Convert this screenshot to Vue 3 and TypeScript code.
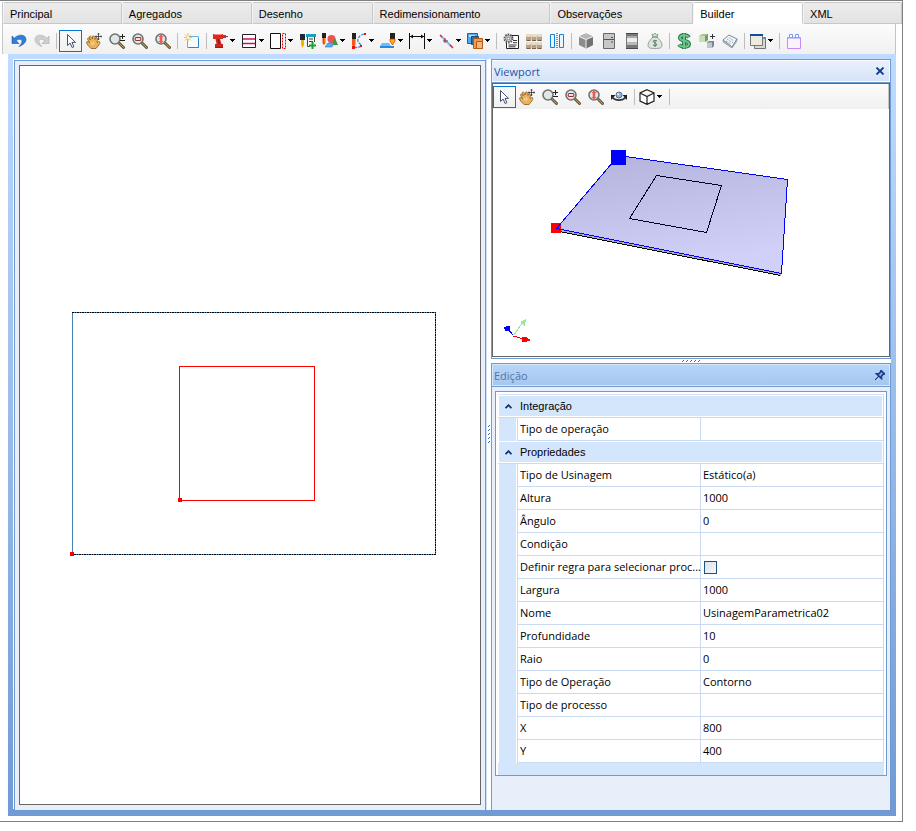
<script setup lang="ts">
import { ref } from 'vue'

interface Tool {
  icon?: string
  label?: string
  menu?: boolean
  sep?: boolean
}
interface Property {
  label: string
  value: string | boolean
}
interface Group {
  title: string
  open: boolean
  rows: Property[]
}

const lens = '<path d="M9.500 9.500l5 5" stroke="#6b5a3a" stroke-width="3" stroke-linecap="round"/><path d="M10.500 10.500l4 4" stroke="#b99a62" stroke-linecap="round"/><circle cx="6" cy="6" r="5" fill="#dfe8e6" stroke="#6f7370" stroke-width="1.600"/>'

// Artwork on a 16 by 16 grid
const icons: Record<string, string> = {
  undo: '<path d="M1 3v7.500h7L5.200 7.700C8 5.500 11.200 6 11 8.500c-.2 2-1.500 3.500-3 5 4-1.500 7-4 7-7C15 1.500 8 .500 3.200 5.200z" fill="#2f7ed8" stroke="#1557ad" stroke-width=".6"/>',
  redo: '<path d="M15 3v7.500H8l2.800-2.800C8 5.500 4.800 6 5 8.500c.2 2 1.500 3.500 3 5-4-1.500-7-4-7-7C1 1.500 8 .500 12.800 5.200z" fill="#cfcfcf" stroke="#a9a9a9" stroke-width=".6"/>',
  pointer: '<path d="M4.500 1.500v11l2.700-2.400 1.900 4.400 1.800-.8-1.900-4.300h3.500z" fill="#fff" stroke="#44506a"/>',
  hand: '<path d="M5 15.500C3 13.500.5 11 .5 9c1-1.200 2.200 0 3.200.8L1.500 6C1.800 4.300 3.200 5 4.300 7L3.200 3.700C4.200 2.300 5.500 3.500 6.300 6l.2-2.700C7.700 2 9 3.500 9 6.500l1.200-2c1.500 0 1.300 2.500.8 5l1.500-1c2.200-.3 1.500 2.500-.5 4.500l-2 2.500z" fill="#e9b35c" stroke="#8a5a1c" stroke-width=".8"/><path d="M5 9l1.500 3M7.500 8.500l.5 3" stroke="#fbe0ad"/><path d="M12.500 0v7M9 3.500h7M11.500 1h2M11.500 6h2M10 2.500v2M15 2.500v2" stroke="#333" stroke-width=".8"/>',
  zoomPm: lens + '<path d="M11 3.500h5M13.500 1v5M11 7.500h5" stroke="#222"/>',
  zoomWin: lens + '<path d="M3.500 4.500h5v3h-5z" fill="none" stroke="#a03030"/><path d="M2 6l2-1.500v3zM10 6L8 4.500v3z" fill="#d44"/>',
  zoomFit: lens + '<path d="M6 1.500L8.800 4H7.300v4h1.500L6 10.500 3.200 8h1.500V4H3.200z" fill="#f45656"/>',
  create: '<path d="M3.500 3.500h11v11h-11z" fill="#f5fbff" stroke="#6bb2e0"/><path d="M4.500 14.500h10v-9" fill="none" stroke="#2f83c5"/><path d="M4 0v9M0 4.500h8M1 1.500l6 6M7 1.500l-6 6" stroke="#efc23c"/><circle cx="4" cy="4.500" r="1.500" fill="#fff5a8"/>',
  drill: '<path d="M1 1h10v1h3v3h-3v1H8l1.500 5H4.500L3.500 6H1z" fill="#d92a22"/><path d="M2 1h8v1H2z" fill="#ff8d80"/><path d="M5.500 6h1.500l1 5H6.500z" fill="#8d1715"/><path d="M3 11h8v4H3z" fill="#c9261f"/><path d="M3 14h8v1H3z" fill="#442"/><path d="M14 3.500h2" stroke="#555"/>',
  rows: '<path d="M1.500 1.500h13v13h-13z" fill="#fff" stroke="#222"/><path d="M2 6h12M2 10.500h12" stroke="#d0105c" stroke-width="1.500"/>',
  edge: '<path d="M.5.500h10v15H.5z" fill="#fff" stroke="#111"/><path d="M12.500.500h3v15h-3z" fill="none" stroke="#f00" stroke-dasharray="2 1"/>',
  millList: '<path d="M0 1h5v6H0z" fill="#1f2937"/><path d="M1 7h3v5L2.500 15 1 12z" fill="#efb700"/><path d="M6 1h10v3H6z" fill="#16a4c4"/><path d="M7.500 4v9.500H10M14.500 4v5M9 6h4M9 8.500h4" fill="none" stroke="#444"/><path d="M12.500 9v7M9 12.500h7" stroke="#18a32b" stroke-width="2"/>',
  millShape: '<path d="M0 0h4v5H0z" fill="#222"/><path d="M.5 5h3v5L2 12 .5 10z" fill="#f03c14"/><path d="M2.500 5h1v5h-1z" fill="#ffbf14"/><circle cx="9.500" cy="6" r="4" fill="#ef5350"/><path d="M16 12h-6l3-7z" fill="#3b9a40"/><path d="M3 14l3-4h6l-2 4z" fill="#55aef0" stroke="#2877c7" stroke-width=".6"/>',
  millPath: '<path d="M1 0h4v6H1z" fill="#222"/><path d="M1 6h3.500v6L2.500 14 1 12z" fill="#f25a14"/><path d="M3 14.500c8 0 8-2 5-4.500S8 1 14 1" fill="none" stroke="#2d8fe0" stroke-width="1.300" stroke-dasharray="3 1"/><path d="M1 13h3v3H1zM13 0h2v2h-2zM9 12h2v2H9z" fill="#e11"/>',
  millPocket: '<path d="M10 0h5v6h-5z" fill="#222"/><path d="M10 6h5v2l-2.500 4L10 8z" fill="#ffb500" stroke="#c63212" stroke-width=".7"/><path d="M0 13h14v2H0z" fill="#1f8de2"/><path d="M2 10h7l2 3H0z" fill="#6fbdf2"/>',
  dimension: '<path d="M.5 0v16M15.500 0v16M1 3.500h14" stroke="#111"/><path d="M1 3.500l3-2v4zM15 3.500l-3-2v4z" fill="#111"/>',
  line: '<path d="M3 3l10 10" stroke="#7ab7ef" stroke-width="2"/><path d="M2 2l2 2M12 12l3 3" stroke="#e22" stroke-width="1.500"/><path d="M5 8h5M7 5v5" stroke="#b22"/>',
  layers: '<path d="M.5.500h10v10H.5z" fill="#55a9e9" stroke="#1565b3"/><path d="M2 2h6v2H2z" fill="#b8dcf8"/><path d="M4.500 3.500h7v8h-7z" fill="#246db3" stroke="#174b7d"/><path d="M6.500 5.500h9v10h-9z" fill="#ef9a4d" stroke="#b65b16"/><path d="M9.500 8.500h6v7h-6z" fill="#f5b477" stroke="#b65b16"/>',
  gearDoc: '<path d="M4.500 2.500h11v13h-12v-6" fill="#fff" stroke="#222"/><path d="M5.500 12h8M5.500 13.800h7M10 7.500h4M10 9.700h4" stroke="#333"/><circle cx="5.500" cy="5.500" r="4" fill="#eee" stroke="#555" stroke-width="2" stroke-dasharray="1.500 1"/><circle cx="5.500" cy="5.500" r="3" fill="#e4e4e4" stroke="#777"/><circle cx="5.500" cy="5.500" r="1.300" fill="#fff" stroke="#555" stroke-width=".7"/>',
  drums: ['0', '5.500', '11'].map(x => ['1', '9'].map(y => `<rect x="${x}" y="${y}" width="5" height="7" rx="1.500" fill="#b8a083"/><rect x="${x}" y="${y}" width="5" height="3" rx="1.500" fill="#e8ddcb"/><path d="M${+x + 0.5} ${+y + 6.5}h4" stroke="#76604a"/>`).join('')).join(''),
  mirror: '<path d="M1.500 1.500h4v13h-4zM10.500 1.500h4v13h-4z" fill="#e9f6ff" stroke="#1683d8"/><path d="M8 0v16" stroke="#222" stroke-dasharray="1 1"/>',
  box: '<path d="M8 .500l7 3v8.500l-7 3.500-7-3.500V3.500z" fill="#8b8b8b"/><path d="M8 .500l7 3-7 3-7-3z" fill="#b7b7b7"/><path d="M8 6.500l7-3v8.500l-7 3.500z" fill="#727272"/><path d="M1 3.500l7 3 7-3M8 6.500v9" fill="none" stroke="#f4f4f4"/>',
  fridge: '<path d="M2.500.500h11v15h-11z" fill="#c7c7c7" stroke="#686868"/><path d="M3 6.500h10M10 4.500h2M10 9h2" stroke="#555"/>',
  metal: '<path d="M2 0h12v16H2z" fill="#777"/><path d="M3 3h10v2H3z" fill="#aaa"/><path d="M3 5h10v4H3z" fill="#ededed"/><path d="M3 9h10v3H3z" fill="#b9b9b9"/><path d="M2 .500h12M2 15.500h12" stroke="#484848"/>',
  bag: '<path d="M5 1l1.500 1L8 0l1.500 2L11 1l-1 3c2 2 5 5 5 8s-2 3.500-7 3.500S1 15 1 12s3-6 5-8z" fill="#dce5de" stroke="#7e9285" stroke-width=".8"/><path d="M5.500 4h5M10 8C6 6 5 9 8 10s2 4-2 2M8 7v7" fill="none" stroke="#587562"/>',
  money: '<path d="M13 4.500C11 1.500 4 1.500 4 5c0 3.500 9 2 9 6 0 3.500-8 3.500-10 .5M8 0v16" fill="none" stroke="#27774a" stroke-width="4"/><path d="M13 4.500C11 1.500 4 1.500 4 5c0 3.500 9 2 9 6 0 3.500-8 3.500-10 .5M8 .500v15" fill="none" stroke="#6cc58c" stroke-width="2"/>',
  boxes: '<path d="M0 3l3-2h6v6L6 9H0z" fill="#a9c690"/><path d="M0 3h6v6H0z" fill="#c8dfb2"/><path d="M6 3l3-2v6L6 9z" fill="#7b9966"/><path d="M8 9l2-1h5v5l-2 2H8z" fill="#7d8893"/><path d="M8 9.500h5V15H8z" fill="#bcc7cf"/><path d="M13.500 1v5M11 3.500h5" stroke="#333"/>',
  notes: '<path d="M1 7l6-5 8 4-5 8z" fill="#f4f7f8" stroke="#7c8790"/><path d="M1 7v2l9 6 5-7V6l-5 8z" fill="#b9c0c4" stroke="#7c8790" stroke-width=".6"/><path d="M5 6l6 4M7 4.500l5 3.500M4 8l5 3" stroke="#8fa5b4" stroke-dasharray="2 1"/>',
  windows: '<path d="M4.500 4.500h11v11h-11z" fill="#d9d9d3" stroke="#6f7376"/><path d="M.5 1.500h12v11H.500z" fill="#edeae0" stroke="#777"/><path d="M0 1h13v2H0z" fill="#124c9b"/><path d="M13 4h3v2h-3z" fill="#4993df"/>',
  brick: '<path d="M1.500 4.500h13v11h-13z" fill="#faf2ff" stroke="#c68bf5"/><path d="M3.500 4V1.500h3V4M9.500 4V1.500h3V4" fill="#fff" stroke="#749af4"/><path d="M2 5h12" stroke="#9f91f5"/>',
  orbit: '<path d="M1.500 8.500c3 3.500 10 3.500 13 0" fill="none" stroke="#333" stroke-width="1.800"/><path d="M0 6h4.500L0 11zM16 6h-4.500L16 11z" fill="#222"/><circle cx="8" cy="6" r="3" fill="#91b7df" stroke="#4e6f99"/><circle cx="7.200" cy="5.200" r="1" fill="#e9f5ff"/>',
  cube: '<path d="M8 .7l7 3.300v8L8 15.400 1 12V4zM1 4l7 3.500L15 4M8 7.500v8" fill="#fff" stroke="#222" stroke-width="1.200"/>',
}

const t = (icon: string, label: string, menu = false): Tool => ({ icon, label, menu })
const sep: Tool = { sep: true }

const mainTools: Tool[] = [
  t('undo', 'Desfazer'), t('redo', 'Refazer'), sep,
  t('pointer', 'Selecionar'), t('hand', 'Mover'), t('zoomPm', 'Zoom'), t('zoomWin', 'Zoom janela'), t('zoomFit', 'Zoom total'), sep,
  t('create', 'Novo'), sep,
  t('drill', 'Furação', true), t('rows', 'Divisão', true), t('edge', 'Borda', true), t('millList', 'Lista de usinagens'),
  t('millShape', 'Usinagem por forma', true), t('millPath', 'Usinagem por caminho', true), t('millPocket', 'Rebaixo', true),
  t('dimension', 'Cota', true), t('line', 'Linha', true), t('layers', 'Camadas', true), sep,
  t('gearDoc', 'Configurações'), t('drums', 'Materiais'), t('mirror', 'Espelhar'), sep,
  t('box', 'Módulo'), t('fridge', 'Equipamento'), t('metal', 'Acabamento'), t('bag', 'Custo'), sep,
  t('money', 'Preço'), t('boxes', 'Agregar'), t('notes', 'Anotações'), sep,
  t('windows', 'Janelas', true), sep,
  t('brick', 'Complementos'),
]
const viewTools: Tool[] = [
  t('pointer', 'Selecionar'), t('hand', 'Mover'), t('zoomPm', 'Zoom'), t('zoomWin', 'Zoom janela'), t('zoomFit', 'Zoom total'),
  t('orbit', 'Orbitar'), sep, t('cube', 'Vista', true), sep,
]

const tabs = ['Principal', 'Agregados', 'Desenho', 'Redimensionamento', 'Observações', 'Builder', 'XML']
const activeTab = ref('Builder')
const mainTool = ref('pointer')
const viewTool = ref('pointer')

const groups = ref<Group[]>([
  { title: 'Integração', open: true, rows: [{ label: 'Tipo de operação', value: '' }] },
  {
    title: 'Propriedades',
    open: true,
    rows: [
      { label: 'Tipo de Usinagem', value: 'Estático(a)' },
      { label: 'Altura', value: '1000' },
      { label: 'Ângulo', value: '0' },
      { label: 'Condição', value: '' },
      { label: 'Definir regra para selecionar proc...', value: false },
      { label: 'Largura', value: '1000' },
      { label: 'Nome', value: 'UsinagemParametrica02' },
      { label: 'Profundidade', value: '10' },
      { label: 'Raio', value: '0' },
      { label: 'Tipo de Operação', value: 'Contorno' },
      { label: 'Tipo de processo', value: '' },
      { label: 'X', value: '800' },
      { label: 'Y', value: '400' },
    ],
  },
])
</script>

<template>
  <div class="page">
    <div class="window">
      <nav class="tabs" role="tablist">
        <button
          v-for="tab in tabs"
          :key="tab"
          type="button"
          role="tab"
          class="tab"
          :class="{ active: tab === activeTab }"
          :aria-selected="tab === activeTab"
          @click="activeTab = tab"
        >{{ tab }}</button>
      </nav>

      <div class="toolbar main-toolbar" role="toolbar">
        <template v-for="(tool, i) in mainTools" :key="i">
          <span v-if="tool.sep" class="sep"></span>
          <button
            v-else
            type="button"
            class="tool"
            :class="{ menu: tool.menu, on: tool.icon === mainTool }"
            :aria-label="tool.label"
            @click="mainTool = tool.icon!"
          >
            <svg class="icon" viewBox="0 0 16 16" fill="none" v-html="icons[tool.icon!]"></svg>
            <svg v-if="tool.menu" class="caret" viewBox="0 0 7 4"><path d="M1 0h5v1H5v1H4v1H3V2H2V1H1z" /></svg>
          </button>
        </template>
      </div>

      <main class="workspace">
        <section class="sheet">
          <div class="canvas">
            <svg class="drawing" viewBox="0 0 460 738" shape-rendering="crispEdges" fill="none">
              <rect x="52.500" y="246.500" width="363" height="242" stroke="#4682b4" />
              <path d="M52 246.500h363.500v242H52" stroke="#000" stroke-dasharray="2 1 1 1" />
              <rect x="159.500" y="300.500" width="135" height="134" stroke="#f00" />
              <path d="M158 432h4v4h-4zM50 486h4v4h-4z" fill="#f00" />
            </svg>
          </div>
        </section>

        <div class="splitter vertical">
          <svg width="4" height="19" viewBox="0 0 4 19" shape-rendering="crispEdges">
            <path v-for="n in 5" :key="n" :d="`M2 ${n * 4 - 4}h1v1h-1zM1 ${n * 4 - 3}h1v1h-1z`" fill="#2d6cc4" />
          </svg>
        </div>

        <div class="side">
          <section class="panel">
            <header class="panel-head">
              <h2>Viewport</h2>
              <button type="button" class="head-button" aria-label="Fechar">
                <svg width="10" height="8" viewBox="0 0 10 8"><path d="M1.500.5l7 7M8.500.5l-7 7" fill="none" stroke="#123c8c" stroke-width="1.800" /></svg>
              </button>
            </header>
            <div class="view">
              <div class="toolbar view-toolbar" role="toolbar">
                <template v-for="(tool, i) in viewTools" :key="i">
                  <span v-if="tool.sep" class="sep"></span>
                  <button
                    v-else
                    type="button"
                    class="tool"
                    :class="{ menu: tool.menu, on: tool.icon === viewTool }"
                    :aria-label="tool.label"
                    @click="viewTool = tool.icon!"
                  >
                    <svg class="icon" viewBox="0 0 16 16" fill="none" v-html="icons[tool.icon!]"></svg>
                    <svg v-if="tool.menu" class="caret" viewBox="0 0 7 4"><path d="M1 0h5v1H5v1H4v1H3V2H2V1H1z" /></svg>
                  </button>
                </template>
              </div>
              <svg class="scene" viewBox="0 0 396 247" shape-rendering="crispEdges" fill="none">
                <defs>
                  <linearGradient id="plate" x1="0" y1="0" x2=".3" y2="1">
                    <stop offset="0" stop-color="#b2b2da" />
                    <stop offset="1" stop-color="#d0d0f8" />
                  </linearGradient>
                </defs>
                <path d="M63.500 119.500L287.500 164.500v2L63.500 122.500z" fill="#b0b0a8" />
                <path d="M63.500 122L287.500 166.500" stroke="#000" />
                <path d="M63.500 119.500L125.500 46.500L294.500 70.500L288.500 164.500z" fill="url(#plate)" />
                <path d="M58 114h10v10H58z" fill="#f00" />
                <path d="M63.500 119.500L125.500 46.500L294.500 70.500L288.500 164.500z" stroke="#00f" />
                <path d="M163.500 66.500L228.500 76.500L213.500 123.500L136.500 109.500z" stroke="#000020" />
                <path d="M118 41h15v15h-15z" fill="#00f" />
                <path d="M20.500 226.500L30 213" stroke="#90ee90" />
                <path d="M33 210l-1 7-5-4z" fill="#90ee90" />
                <path d="M20.500 226.500L15 220" stroke="#00f" />
                <path d="M11 218l4-1h2v5h-5z" fill="#00f" />
                <path d="M20.500 227l10 3" stroke="#f00" />
                <path d="M29 228l4 0 5 3-5 2h-4z" fill="#f00" />
              </svg>
            </div>
          </section>

          <div class="splitter horizontal">
            <svg width="19" height="4" viewBox="0 0 19 4" shape-rendering="crispEdges">
              <path v-for="n in 5" :key="n" :d="`M${n * 4 - 3} 1h1v1h-1zM${n * 4 - 4} 2h1v1h-1z`" fill="#2d6cc4" />
            </svg>
          </div>

          <section class="panel editor">
            <header class="panel-head muted">
              <h2>Edição</h2>
              <button type="button" class="head-button" aria-label="Fixar">
                <svg width="10" height="10" viewBox="0 0 10 10"><path d="M0 10l3.500-3.500" stroke="#fff" stroke-width="2.500" /><path d="M0 10l4-4" stroke="#123c8c" stroke-width="1.300" /><path d="M6 .5l3.500 3.500-1.500.5L6.500 6v2.500L1.500 3.800H4L5.500 2z" fill="#8fb0e0" stroke="#123c8c" stroke-width="1.600" /></svg>
              </button>
            </header>
            <div class="props">
              <table>
                <colgroup>
                  <col class="c-gutter" />
                  <col class="c-label" />
                  <col />
                </colgroup>
                <tbody v-for="group in groups" :key="group.title">
                  <tr class="group">
                    <th colspan="3" scope="rowgroup">
                      <button type="button" :aria-expanded="group.open" @click="group.open = !group.open">
                        <svg width="7" height="5" viewBox="0 0 7 5"><path d="M.5 4.200l3-3 3 3" fill="none" stroke="#0f2f6f" stroke-width="1.800" /></svg>
                        {{ group.title }}
                      </button>
                    </th>
                  </tr>
                  <template v-if="group.open">
                    <tr v-for="row in group.rows" :key="row.label">
                      <td class="gutter"></td>
                      <th scope="row">
                        <label v-if="typeof row.value === 'boolean'" for="rule">{{ row.label }}</label>
                        <template v-else>{{ row.label }}</template>
                      </th>
                      <td class="value">
                        <input v-if="typeof row.value === 'boolean'" id="rule" v-model="row.value" type="checkbox" />
                        <template v-else>{{ row.value }}</template>
                      </td>
                    </tr>
                  </template>
                </tbody>
              </table>
              <div class="props-foot"></div>
            </div>
          </section>
        </div>
      </main>
    </div>
  </div>
</template>

<style>
body {
  background: #fff;
}
</style>

<style scoped>
.page {
  box-sizing: border-box;
  display: flex;
  min-height: 100vh;
  padding: 0 13px 9px 0;
  font: 11px "Open Sans", "Noto Sans", sans-serif;
  color: #000;
}
.page *,
.page *::before {
  box-sizing: border-box;
}
button {
  margin: 0;
  padding: 0;
  border: 0;
  background: none;
  color: inherit;
  font: inherit;
}
.window {
  flex: 1;
  min-width: 0;
  display: flex;
  flex-direction: column;
  border: solid #7f7f7f;
  border-width: 1px 1px 1px 0;
  padding: 1px 0 5px 2px;
}
.tabs {
  display: grid;
  grid-template-columns: 119fr 130fr 121fr 178fr 143fr 110fr 99fr;
  border-left: 1px solid #c8c8c8;
}
.tab {
  height: 22px;
  padding: 1px 6px 0;
  border: 1px solid #c8c8c8;
  border-left-color: #f4f4f4;
  border-radius: 2px 2px 0 0;
  background: linear-gradient(#ececec, #e2e2e2);
  font: 11px/20px "Liberation Sans", Arial, sans-serif;
  text-align: left;
  white-space: nowrap;
}
.tab.active {
  background: #fff;
  border-bottom-color: #fff;
}
.toolbar {
  display: flex;
  align-items: center;
  height: 25px;
  background: linear-gradient(#fdfcfd, #f0f0f0);
  border-right: 1px solid #c4c4c4;
}
.main-toolbar {
  height: 30px;
  padding: 3px 0 0 4px;
  margin-right: 6px;
  border-left: 1px solid #c8c8c8;
}
.tool {
  flex: none;
  display: flex;
  align-items: center;
  width: 23px;
  height: 22px;
  padding-left: 4px;
}
.tool.menu {
  width: 29px;
  padding-left: 3px;
  gap: 1px;
}
.tool.on {
  padding-left: 3px;
  border: 1px solid #0078d7;
}
.view-toolbar .tool {
  padding-left: 3px;
}
.view-toolbar .tool.menu,
.view-toolbar .tool.on {
  padding-left: 2px;
}
.icon {
  width: 16px;
  height: 16px;
  flex: none;
}
.caret {
  width: 7px;
  height: 4px;
  flex: none;
}
.sep {
  flex: none;
  width: 6px;
  height: 16px;
  background: linear-gradient(#bdbdbd, #bdbdbd) 3px 0 / 1px 100% no-repeat;
}
.workspace {
  flex: 1;
  display: grid;
  grid-template-columns: minmax(0, 1fr) 4px minmax(0, 400px);
  margin: 0 6px;
  padding: 5px 5px 6px;
  background: linear-gradient(#bfdbff, #6f9ad4);
}
.sheet {
  display: flex;
  background: #e8effa;
  border: 1px solid #6f9ad4;
  border-bottom: 0;
  padding: 4px 4px 5px;
  margin: 1px 1px 0;
  box-shadow: -1px -1px #fff, 1px 0 #cfe1fb;
}
.canvas {
  flex: 1;
  min-width: 0;
  display: flex;
  flex-direction: column;
  border: 1px solid #666;
  background: #fff;
}
.drawing {
  display: block;
  width: 100%;
  height: 0;
  flex: 1 1 0;
  min-height: 0;
}
.splitter {
  display: flex;
  align-items: center;
  justify-content: center;
  background: #fff;
}
.splitter.horizontal {
  height: 4px;
}
.side {
  display: flex;
  flex-direction: column;
  min-width: 0;
}
.panel {
  border: 1px solid #6f9ad4;
  background: #fff;
  padding-bottom: 1px;
}
.editor {
  flex: 1;
  background: #e8effa;
  border-bottom: 0;
}
.panel-head {
  display: flex;
  align-items: center;
  justify-content: space-between;
  height: 22px;
  border: 1px solid #fff;
  border-left-color: #e8f1ff;
  padding: 0 4px 0 1px;
  background: linear-gradient(#e9f1fd, #d5e3f7);
  color: #2a52a8;
  box-shadow: 0 1px #6f9ad4;
  margin-bottom: 1px;
}
.panel-head.muted {
  background: linear-gradient(#b7d5fb, #a6c7ef);
  border-color: #d7e7fc;
  color: #56749f;
}
.panel-head h2 {
  margin: 0;
  font-size: 11px;
  font-weight: 400;
}
.head-button {
  display: flex;
}
.view {
  border: 1px solid #666;
}
.scene {
  display: block;
  width: 100%;
}
.props {
  margin: 5px 3px 0;
  padding: 2px 2px 0;
  border: 1px solid #6f9ad4;
  background: #fff;
}
table {
  width: 100%;
  table-layout: fixed;
  border-collapse: separate;
  border-spacing: 0;
  border-top: 1px solid #d4e3f8;
}
.c-gutter {
  width: 19px;
}
.c-label {
  width: 183px;
}
th,
td {
  height: 23px;
  padding: 0 2px;
  border: 0 solid #c9dbf4;
  border-width: 0 0 1px 1px;
  font-weight: 400;
  line-height: 16px;
  text-align: left;
  white-space: nowrap;
}
td.value {
  border-right-width: 1px;
}
td.gutter {
  border-width: 0;
  background: linear-gradient(#d4e6fc, #d4e6fc) 1px 0 / 17px 100% no-repeat;
}
.group th {
  padding: 1px;
  border-left-width: 0;
  border-right-width: 1px;
}
.group button {
  display: flex;
  align-items: center;
  gap: 8px;
  width: 100%;
  height: 20px;
  padding-left: 6px;
  background: #d4e6fc;
  font: 11px/20px "Liberation Sans", Arial, sans-serif;
}
input[type="checkbox"] {
  appearance: none;
  display: block;
  width: 13px;
  height: 13px;
  margin: 0 0 0 1px;
  border: 1px solid #1c5180;
  background: linear-gradient(135deg, #dde0ea, #f8f8fb);
}
input[type="checkbox"]:checked {
  background: #1c5180;
}
.props-foot {
  height: 12px;
  background: #d4e6fc;
}
</style>
